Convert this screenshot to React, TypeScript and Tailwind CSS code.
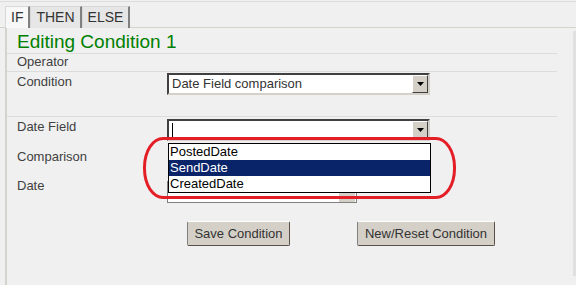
const FONT = { fontFamily: '"Liberation Sans", Arial, sans-serif' };

function SelectBox({ value, caret }: { value?: string; caret?: boolean }) {
  return (
    <div className="flex h-[22px] w-[263px] border-2 border-t-[#404040] border-l-[#404040] border-b-[#d4d0c8] border-r-[#d4d0c8] bg-white">
      <div className="flex-1 flex items-center pl-[3px] text-[13px] text-[#333]">
        {caret && <span className="inline-block w-px h-[15px] bg-black" />}
        {value}
      </div>
      <div className="w-[16px] flex items-center justify-center bg-[#d4d0c8] border border-t-white border-l-white border-b-[#404040] border-r-[#404040]">
        <svg width="7" height="4" viewBox="0 0 7 4">
          <path d="M0 0h7L3.5 4z" fill="#000" />
        </svg>
      </div>
    </div>
  );
}

function Tab({ label, active }: { label: string; active?: boolean }) {
  return (
    <div
      className={
        "h-[22px] flex items-center px-[5px] text-[14px] text-[#333] border-l border-t border-l-[#d8d8d8] border-t-[#d8d8d8] border-r-2 border-r-[#808080] " +
        (active ? "bg-[#f8f8f8]" : "bg-[#e6e6e6]")
      }
    >
      {label}
    </div>
  );
}

export default function App() {
  return (
    <div className="relative w-[576px] h-[285px] overflow-hidden bg-[#f0f0f0]" style={FONT}>
      <div className="h-px mt-px bg-[#dcdcdc]" />
      {/* Tabs */}
      <div className="flex pl-[5px] pt-[4px] h-[26px] border-b border-[#d4d4cc]">
        <Tab label="IF" active />
        <Tab label="THEN" />
        <Tab label="ELSE" />
      </div>

      <div className="flex h-[258px]">
        <div className="ml-[5px] w-[2px] bg-[#d4d4cc]" />
        <div className="w-[550px] flex flex-col">
          <div className="h-[26px] border-b border-[#dcdcdc] pl-[10px] pt-[4px] text-[19px] leading-[20px] text-[#008000]">
            Editing Condition 1
          </div>
          <div className="h-[18px] border-b border-[#dcdcdc] pl-[10px] text-[13px] leading-[16px] text-[#404040]">
            Operator
          </div>
          <div className="h-[45px] border-b border-[#dcdcdc] pl-[10px] grid grid-cols-[150px_1fr] text-[13px] text-[#404040]">
            <div className="pt-[2px] leading-[16px]">Condition</div>
            <div className="pt-[1px]">
              <SelectBox value="Date Field comparison" />
            </div>
          </div>
          <div className="pl-[10px] grid grid-cols-[150px_1fr] text-[13px] text-[#404040]">
            <div className="pt-[2px] leading-[16px] h-[30px]">Date Field</div>
            <div className="pt-[2px]">
              <SelectBox caret />
            </div>
            <div className="pt-[2px] leading-[16px] h-[30px]">Comparison</div>
            <div />
            <div className="pt-[1px] leading-[16px] h-[44px]">Date</div>
            <div className="pt-[4px]">
              <div className="flex h-[22px] w-[190px] border border-[#808080] bg-white">
                <div className="flex-1" />
                <div className="w-[16px] mr-[1px] bg-[#d4d0c8] text-[9px] leading-[10px] text-black flex items-start justify-center pt-px font-bold">
                  15
                </div>
              </div>
            </div>
          </div>
          <div className="flex pl-[180px] gap-[67px]">
            <button className="h-[25px] w-[103px] rounded-[2px] bg-[#d4d0c8] border border-t-white border-l-[#808080] border-b-[#5a5048] border-r-[#5a5048] text-[13px] text-[#333]">
              Save Condition
            </button>
            <button className="h-[25px] w-[138px] rounded-[2px] bg-[#d4d0c8] border border-t-white border-l-[#808080] border-b-[#5a5048] border-r-[#5a5048] text-[13px] text-[#333]">
              New/Reset Condition
            </button>
          </div>
        </div>
        <div className="ml-[16px] mt-[3px] w-[3px] h-[245px] bg-[#e0e0e0]" />
      </div>

      {/* Open dropdown list */}
      <div className="absolute left-[168px] top-[143px] w-[263px] h-[50px] border border-black bg-white text-[13px] leading-[16px] text-black">
        <div className="pl-[1px] h-[16px]">PostedDate</div>
        <div className="pl-[1px] h-[16px] bg-[#0a246a] text-white">SendDate</div>
        <div className="pl-[1px] h-[16px]">CreatedDate</div>
      </div>

      {/* Red highlight */}
      <div className="absolute left-[143px] top-[137px] w-[313px] h-[62px] border-[3px] border-[#e41e26] rounded-[20px/30px]" />
    </div>
  );
}
